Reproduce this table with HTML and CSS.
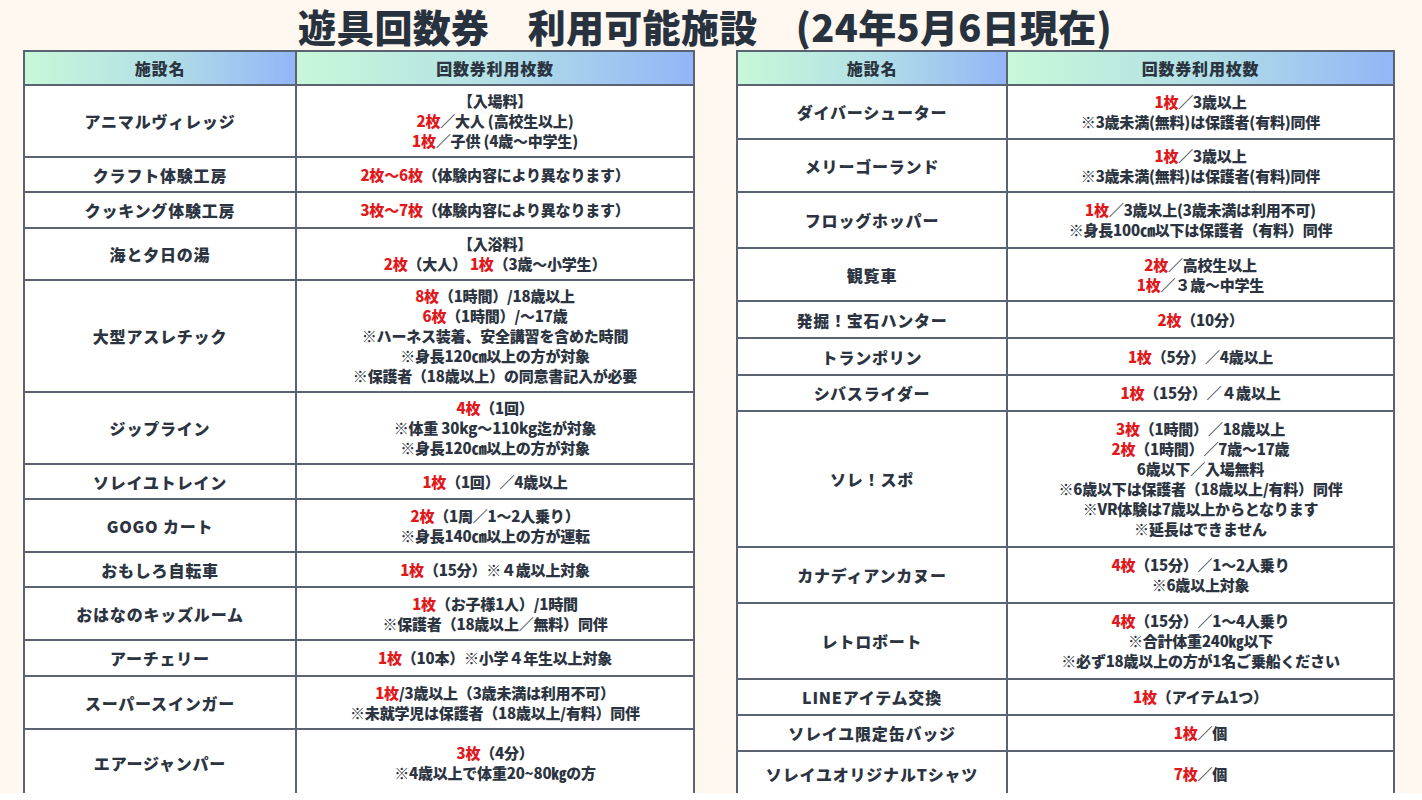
FILE: index.html
```html
<!DOCTYPE html>
<html lang="ja">
<head>
<meta charset="utf-8">
<title>遊具回数券 利用可能施設</title>
<link rel="stylesheet" href="styles.css">
</head>
<body>
<div class="page">
  <h1 class="title">遊具回数券　利用可能施設　(24年5月6日現在)</h1>
  <div class="tables">
    <div class="tbl tbl-left">
      <div class="cell head">施設名</div>
      <div class="cell head">回数券利用枚数</div>

      <div class="cell name">アニマルヴィレッジ</div>
      <div class="cell val"><div>【入場料】<br><span class="red">2枚</span>／大人 (高校生以上)<br><span class="red">1枚</span>／子供 (4歳〜中学生)</div></div>

      <div class="cell name">クラフト体験工房</div>
      <div class="cell val"><div><span class="red">2枚〜6枚</span>（体験内容により異なります）</div></div>

      <div class="cell name">クッキング体験工房</div>
      <div class="cell val"><div><span class="red">3枚〜7枚</span>（体験内容により異なります）</div></div>

      <div class="cell name">海と夕日の湯</div>
      <div class="cell val"><div>【入浴料】<br><span class="red">2枚</span>（大人）&nbsp;<span class="red">1枚</span>（3歳〜小学生）</div></div>

      <div class="cell name">大型アスレチック</div>
      <div class="cell val"><div><span class="red">8枚</span>（1時間）/18歳以上<br><span class="red">6枚</span>（1時間）/〜17歳<br>※ハーネス装着、安全講習を含めた時間<br>※身長120㎝以上の方が対象<br>※保護者（18歳以上）の同意書記入が必要</div></div>

      <div class="cell name">ジップライン</div>
      <div class="cell val"><div><span class="red">4枚</span>（1回）<br>※体重 30kg〜110kg迄が対象<br>※身長120㎝以上の方が対象</div></div>

      <div class="cell name">ソレイユトレイン</div>
      <div class="cell val"><div><span class="red">1枚</span>（1回）／4歳以上</div></div>

      <div class="cell name">GOGO カート</div>
      <div class="cell val"><div><span class="red">2枚</span>（1周／1〜2人乗り）<br>※身長140㎝以上の方が運転</div></div>

      <div class="cell name">おもしろ自転車</div>
      <div class="cell val"><div><span class="red">1枚</span>（15分）※４歳以上対象</div></div>

      <div class="cell name">おはなのキッズルーム</div>
      <div class="cell val"><div><span class="red">1枚</span>（お子様1人）/1時間<br>※保護者（18歳以上／無料）同伴</div></div>

      <div class="cell name">アーチェリー</div>
      <div class="cell val"><div><span class="red">1枚</span>（10本）※小学４年生以上対象</div></div>

      <div class="cell name">スーパースインガー</div>
      <div class="cell val"><div><span class="red">1枚</span>/3歳以上（3歳未満は利用不可）<br>※未就学児は保護者（18歳以上/有料）同伴</div></div>

      <div class="cell name">エアージャンパー</div>
      <div class="cell val"><div><span class="red">3枚</span>（4分）<br>※4歳以上で体重20~80㎏の方</div></div>
    </div>

    <div class="tbl tbl-right">
      <div class="cell head">施設名</div>
      <div class="cell head">回数券利用枚数</div>

      <div class="cell name">ダイバーシューター</div>
      <div class="cell val"><div><span class="red">1枚</span>／3歳以上<br>※3歳未満(無料)は保護者(有料)同伴</div></div>

      <div class="cell name">メリーゴーランド</div>
      <div class="cell val"><div><span class="red">1枚</span>／3歳以上<br>※3歳未満(無料)は保護者(有料)同伴</div></div>

      <div class="cell name">フロッグホッパー</div>
      <div class="cell val"><div><span class="red">1枚</span>／3歳以上(3歳未満は利用不可)<br>※身長100㎝以下は保護者（有料）同伴</div></div>

      <div class="cell name">観覧車</div>
      <div class="cell val"><div><span class="red">2枚</span>／高校生以上<br><span class="red">1枚</span>／３歳〜中学生</div></div>

      <div class="cell name">発掘！宝石ハンター</div>
      <div class="cell val"><div><span class="red">2枚</span>（10分）</div></div>

      <div class="cell name">トランポリン</div>
      <div class="cell val"><div><span class="red">1枚</span>（5分）／4歳以上</div></div>

      <div class="cell name">シバスライダー</div>
      <div class="cell val"><div><span class="red">1枚</span>（15分）／４歳以上</div></div>

      <div class="cell name">ソレ！スポ</div>
      <div class="cell val"><div><span class="red">3枚</span>（1時間）／18歳以上<br><span class="red">2枚</span>（1時間）／7歳〜17歳<br>6歳以下／入場無料<br>※6歳以下は保護者（18歳以上/有料）同伴<br>※VR体験は7歳以上からとなります<br>※延長はできません</div></div>

      <div class="cell name">カナディアンカヌー</div>
      <div class="cell val"><div><span class="red">4枚</span>（15分）／1〜2人乗り<br>※6歳以上対象</div></div>

      <div class="cell name">レトロボート</div>
      <div class="cell val"><div><span class="red">4枚</span>（15分）／1〜4人乗り<br>※合計体重240㎏以下<br>※必ず18歳以上の方が1名ご乗船ください</div></div>

      <div class="cell name">LINEアイテム交換</div>
      <div class="cell val"><div><span class="red">1枚</span>（アイテム1つ）</div></div>

      <div class="cell name">ソレイユ限定缶バッジ</div>
      <div class="cell val"><div><span class="red">1枚</span>／個</div></div>

      <div class="cell name">ソレイユオリジナルTシャツ</div>
      <div class="cell val"><div><span class="red">7枚</span>／個</div></div>
    </div>
  </div>
</div>
</body>
</html>
```

FILE: styles.css
```css
html, body {
  margin: 0;
  padding: 0;
  background: #ffffff;
}

body {
  font-family: "Noto Sans CJK JP", "Noto Sans", sans-serif;
  color: #2b3440;
}

.page {
  background: #fef8f1;
  height: 793px;
  width: 1422px;
}

.title {
  margin: 0;
  height: 50px;
  line-height: 52px;
  text-align: center;
  font-size: 38px;
  font-weight: 900;
  color: #28323f;
  padding-right: 12px;
  letter-spacing: 0.3px;
  white-space: nowrap;
}

.tables {
  display: flex;
  gap: 41px;
  padding-left: 23px;
}

.tbl {
  display: grid;
  box-sizing: border-box;
  border-top: 2px solid #5a6371;
  border-left: 2px solid #5a6371;
}

.tbl-left {
  width: 672px;
  grid-template-columns: 272px 1fr;
  grid-template-rows: 34px 72px 35px 36px 52px 112px 72px 35px 53px 35px 53px 36px 53px 67px;
}

.tbl-right {
  width: 659px;
  grid-template-columns: 270px 1fr;
  grid-template-rows: 34px 54px 53px 56px 53px 37px 37px 36px 136px 56px 76px 36px 36px 45px;
}

.cell {
  box-sizing: border-box;
  border-right: 2px solid #5a6371;
  border-bottom: 2px solid #5a6371;
  background: #ffffff;
  display: flex;
  align-items: center;
  justify-content: center;
  text-align: center;
  font-weight: 900;
  white-space: nowrap;
}

.head {
  background: linear-gradient(to right, #c8f8d8 0%, #b3e0e6 50%, #92b6f7 100%);
  font-size: 16px;
  letter-spacing: 0.8px;
  color: #2b3440;
}

.name {
  font-size: 16px;
  letter-spacing: 0.8px;
}

.val {
  font-size: 15px;
  line-height: 20px;
  letter-spacing: -0.2px;
}

.red {
  color: #e0191c;
}
```
